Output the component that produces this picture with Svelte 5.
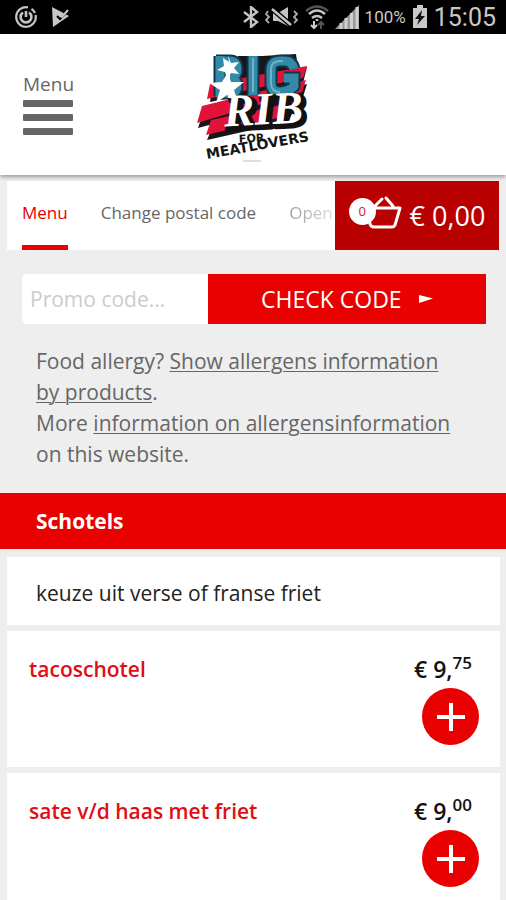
<script>
  const dishes = [
    { name: 'tacoschotel', euros: '9', cents: '75' },
    { name: 'sate v/d haas met friet', euros: '9', cents: '00' }
  ];
  let promo = $state('');
</script>

<div class="page">
  <div class="status">
    <div class="group left">
      <svg width="22" height="22" viewBox="0 0 22 22" fill="none" stroke="#c4c4c4" stroke-width="2.2">
        <path d="M13 1.4A9.8 9.8 0 1 0 20.600 9M16.500 2.800A9.800 9.800 0 0 1 20 7" />
        <path d="M8 6.500A5.400 5.400 0 1 0 14 6.500" stroke-width="2.600" />
        <path d="M11 5v6" stroke-width="2.600" />
      </svg>
      <svg width="20" height="20" viewBox="0 0 20 20">
        <path d="M1 0 18 9 2 20Z" fill="#c8c8c8" />
        <path d="M6 9l3 3 9-9" fill="none" stroke="#000" stroke-width="2" />
        <path d="M8 8l3 2 6-7" fill="none" stroke="#c8c8c8" stroke-width="2" />
      </svg>
    </div>
    <div class="group right">
      <svg width="16" height="22" viewBox="0 0 16 22" fill="none" stroke="#c4c4c4" stroke-width="2.4">
        <path d="M1 6l13 10-6 5V1l6 5L1 16" />
      </svg>
      <svg width="34" height="22" viewBox="0 0 34 22">
        <path d="M8 7h5l10-6v19l-10-5H8z" fill="#c4c4c4" />
        <path d="M6 2l21 18" stroke="#000" stroke-width="5" />
        <path d="M7 3l19 16" stroke="#c4c4c4" stroke-width="2.6" />
        <path d="M3 5l-2 3 3 3-3 3 3 3M29 5l3 3-3 3 3 3-3 3" fill="none" stroke="#aaa" stroke-width="1.8" />
      </svg>
      <svg width="24" height="26" viewBox="0 0 24 26" fill="none" stroke-width="2.6">
        <path d="M1 7q11-9 22 0" stroke="#555" />
        <path d="M4 10q8-7 16 0M7 14q5-4 10 0" stroke="#c4c4c4" />
        <path d="M12 15v2" stroke="#c4c4c4" />
        <path d="M9 17v7M6 21l3 3 3-3" stroke="#ccc" stroke-width="2" />
        <path d="M16 25v-7M13 21l3-3 3 3" stroke="#555" stroke-width="2" />
      </svg>
      <svg width="24" height="24" viewBox="0 0 24 24">
        <path d="M0 24 24 0v24z" fill="#999" />
        <path d="M6 18v6M11 13v11M16.500 8v16M22 2v22" stroke="#d0d0d0" stroke-width="3" />
      </svg>
      <span class="percent">100%</span>
      <svg width="16" height="24" viewBox="0 0 16 24">
        <path d="M1 3h4V0h6v3h4v20H1z" fill="#c8c8c8" />
        <path d="M10 5 3 14h4l-2 6 8-9H9z" fill="#111" />
      </svg>
      <span class="clock">15:05</span>
    </div>
  </div>

  <header>
    <button class="menu" type="button">
      <span>Menu</span>
      <i></i><i></i><i></i>
    </button>
    <svg class="logo" width="126" height="116" viewBox="-2 -2 126 116" role="img" aria-label="Big Rib for Meatlovers">
      <g fill="#17171b">
        <path d="M20 36 115 15 111 31 18 50z" />
        <path d="M12 58 115 32 110 48 6 76z" />
        <path d="M21 74 104 54 96 70 15 88z" />
        <path d="M46 4h24l34-2 3 22-8 22-38 6-14-8z" />
      </g>
      <path d="M18 32 115 14 111 26 15 47z" fill="#e11438" />
      <path d="M10 54 114 28 110 40 5 71z" fill="#e11438" />
      <path d="M19 68 102 50 94 64 14 83z" fill="#e11438" />
      <g stroke="#123549" stroke-width="13" fill="none">
        <path d="M28 4v40M24 9h14q7 0 7 8t-7 8M38 26q7 1 7 8t-7 7H24M61 4v39M102 17q-2-8-9-8h-5q-9 0-9 9v13q0 9 9 9t14-6v-8H92" />
      </g>
      <g stroke="#3589a8" stroke-width="9" fill="none">
        <path d="M28 4v40M24 9h14q7 0 7 8t-7 8M38 26q7 1 7 8t-7 7H24M61 4v39M102 17q-2-8-9-8h-5q-9 0-9 9v13q0 9 9 9t14-6v-8H92" />
      </g>
      <path d="M61 6v34M91 9h-3q-9 0-9 9v13q0 9 9 9" stroke="#70b3c5" stroke-width="2" fill="none" />
      <g fill="#fff">
        <path d="m36 4 3 7 8-1-5 6 5 6-8-1-4 7-2-8-8-2 7-4-1-8 6 4z" />
        <path d="m36 20 3 10 13 0-10 8 4 12-11-7-11 8 4-13-11-7 13-1z" />
      </g>
      <g font-family="Liberation Serif, serif" font-weight="700" font-style="italic" font-size="46" transform="rotate(-3 60 65)">
        <text x="35" y="76" fill="#111" stroke="#111" stroke-width="5" stroke-linejoin="round" aria-hidden="true">RIB</text>
        <text x="32" y="73" fill="#fff">RIB</text>
      </g>
      <g font-family="DejaVu Sans, sans-serif" font-weight="700" fill="#151515">
        <text x="47" y="90" font-size="11" transform="rotate(-3 60 88)">FOR</text>
        <text x="15" y="107" font-size="14" transform="rotate(-10 15 107)">MEATLOVERS</text>
      </g>
      <path d="M51 109h18" stroke="#ddd" stroke-width="2" />
    </svg>
  </header>

  <div class="navrow">
    <nav>
      <a class="active" href="#menu">Menu</a>
      <a href="#postal">Change postal code</a>
      <a class="faded" href="#opening">Open</a>
    </nav>
    <button class="cart" type="button">
      <div class="basket">
        <svg width="54" height="42" viewBox="0 0 54 42">
          <path d="M20 16H51L46 33Q45 35 43 35H25Q22 35 21 32L16 16zM25 15l8-8M37 6l7 8" fill="none" stroke="#fff" stroke-width="3" stroke-linejoin="round" stroke-linecap="round" />
        </svg>
        <span class="badge">0</span>
      </div>
      <span>€ 0,00</span>
    </button>
  </div>

  <form class="promo" onsubmit={(e) => e.preventDefault()}>
    <input type="text" aria-label="Promo code" placeholder="Promo code..." bind:value={promo} />
    <button type="submit">
      CHECK CODE
      <svg width="14" height="8" viewBox="0 0 14 8"><path d="M0 0 14 3.500 0 8z" fill="#fff" /></svg>
    </button>
  </form>

  <p class="allergy">
    Food allergy? <a href="#allergens">Show allergens information by products</a>.<br />
    More <a href="#info">information on allergensinformation</a> on this website.
  </p>

  <h2>Schotels</h2>
  <div class="cards">
    <p class="note">keuze uit verse of franse friet</p>
    {#each dishes as dish}
      <article>
        <h3>{dish.name}</h3>
        <div class="buy">
          <div class="price">€ {dish.euros},<sup>{dish.cents}</sup></div>
          <button type="button" aria-label="Add {dish.name}">
            <svg width="28" height="28" viewBox="0 0 28 28"><path d="M14 0v28M0 14h28" stroke="#fff" stroke-width="4" /></svg>
          </button>
        </div>
      </article>
    {/each}
  </div>
</div>

<style>
  :global(body) { background: #eee; }
  .page {
    font-family: "Open Sans", "Noto Sans", sans-serif;
    font-size: 21px;
    color: #666;
    background: #eee;
  }
  * { box-sizing: border-box; }
  button, input { font: inherit; border: 0; margin: 0; padding: 0; }
  svg { display: block; flex: none; }
  .status {
    height: 34px;
    padding: 0 10px 0 15px;
    background: #000;
    color: #c8c8c8;
    font-family: Roboto, sans-serif;
    display: flex;
    align-items: center;
    justify-content: space-between;
  }
  .group { display: flex; align-items: center; }
  .left { gap: 14px; }
  .right { gap: 6px; }
  .percent { font-size: 17px; }
  .clock { font-size: 25px; }
  header {
    position: relative;
    display: grid;
    grid-template-columns: 1fr auto 1fr;
    align-items: start;
    height: 141px;
    padding: 16px 23px 0;
    background: #fff;
    box-shadow: 0 2px 4px rgba(0, 0, 0, 0.35);
  }
  .logo { overflow: visible; }
  .menu {
    width: 50px;
    margin-top: 20px;
    background: none;
    color: #666;
    font-size: 19px;
    line-height: 28px;
    display: flex;
    flex-direction: column;
    align-items: flex-start;
    gap: 7px;
  }
  .menu span { margin-bottom: -5px; }
  .menu i { width: 50px; height: 7px; border-radius: 1px; background: #666; }
  .navrow {
    display: flex;
    height: 69px;
    margin: 6px 7px 0;
    background: #fff;
  }
  nav {
    flex: 1;
    min-width: 0;
    display: flex;
    gap: 33px;
    padding-left: 15px;
    font-size: 17px;
    line-height: 64px;
    white-space: nowrap;
  }
  nav a { color: #666; text-decoration: none; }
  nav .active { color: #e60000; border-bottom: 5px solid #e90000; }
  nav .faded {
    color: transparent;
    background: linear-gradient(to right, #999, #ddd) text;
  }
  .cart {
    width: 164px;
    background: #b80000;
    color: #fff;
    display: flex;
    align-items: center;
    justify-content: center;
    gap: 7px;
    font-size: 27px;
  }
  .basket { position: relative; }
  .badge {
    position: absolute;
    left: 0;
    top: 0;
    width: 27px;
    height: 27px;
    border-radius: 50%;
    background: #fff;
    color: #d02020;
    font-size: 13px;
    line-height: 27px;
    text-align: center;
  }
  .basket svg { margin-top: -6px; }
  .promo {
    display: grid;
    grid-template-columns: 2fr 3fr;
    height: 50px;
    margin: 24px 20px 0 22px;
  }
  .promo input {
    min-width: 0;
    padding: 0 8px;
    background: #fff;
    border-radius: 5px 0 0 5px;
  }
  .promo input::placeholder { color: #ccc; opacity: 1; }
  .promo button {
    display: flex;
    align-items: center;
    justify-content: center;
    gap: 17px;
    background: #e90000;
    color: #fff;
    font-size: 23px;
  }
  .allergy { margin: 22px 50px 23px 36px; line-height: 31px; }
  .allergy a { color: inherit; text-underline-offset: 2px; text-decoration-thickness: 1px; }
  h2 {
    margin: 0;
    padding: 0 36px;
    font-size: 21px;
    line-height: 56px;
    background: #e90000;
    color: #fff;
  }
  .cards { display: flex; flex-direction: column; gap: 6px; padding: 8px 6px 0 7px; }
  .note {
    margin: 0;
    padding: 5px 29px 0;
    line-height: 63px;
    background: #fff;
    color: #222;
  }
  article {
    display: flex;
    justify-content: space-between;
    min-height: 136px;
    padding: 22px 21px 22px 22px;
    background: #fff;
  }
  h3 { margin: 0; font-size: 21px; line-height: 32px; font-weight: 600; color: #e00d14; }
  .buy { display: flex; flex-direction: column; align-items: flex-end; gap: 3px; }
  .price { padding-right: 7px; font-size: 23px; line-height: 32px; font-weight: 600; color: #111; }
  .price sup { font-size: 17px; line-height: 0; }
  .buy button {
    width: 57px;
    height: 57px;
    border-radius: 50%;
    background: #e90000;
    display: grid;
    place-items: center;
  }
</style>
